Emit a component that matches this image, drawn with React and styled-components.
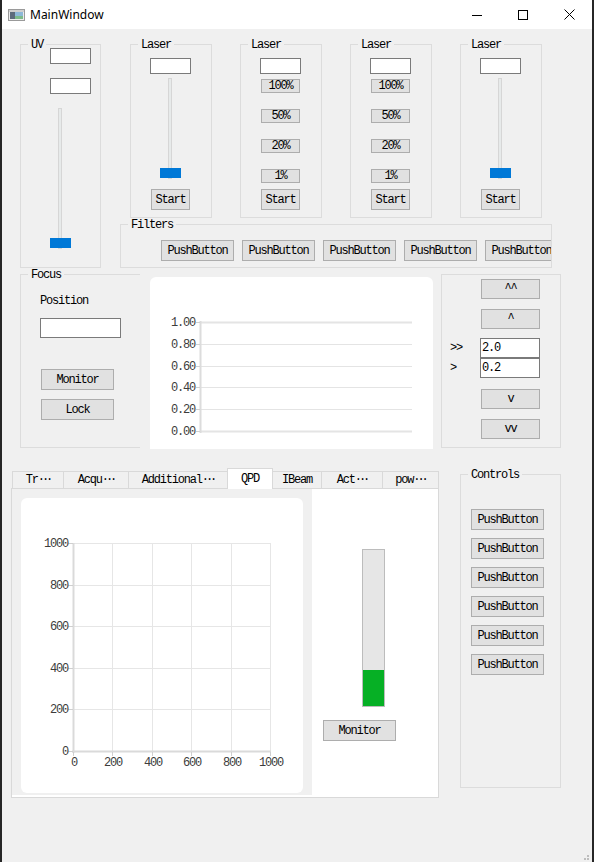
import React from "react";
import styled, { createGlobalStyle } from "styled-components";

const GlobalStyle = createGlobalStyle`
  html, body {
    margin: 0;
    padding: 0;
    background: #262626;
  }
  body {
    font-family: "Liberation Mono", "Courier New", monospace;
    font-size: 12px;
    letter-spacing: -1.2px;
    color: #000;
  }
  * {
    box-sizing: border-box;
  }
`;

const Window = styled.div`
  position: relative;
  margin-left: 2px;
  width: 590px;
  height: 862px;
  background: #f0f0f0;
  display: flex;
  flex-direction: column;
  overflow: hidden;
`;

const TitleBar = styled.div`
  height: 29px;
  flex-shrink: 0;
  display: flex;
  align-items: center;
  background: #fff;
  padding-left: 6px;
`;

const WindowTitle = styled.span`
  flex: 1;
  margin-left: 5px;
  font-family: "Noto Sans", "Liberation Sans", sans-serif;
  font-size: 12px;
  letter-spacing: 0;
`;

const CaptionButton = styled.div`
  width: 46px;
  height: 29px;
  display: flex;
  align-items: center;
  justify-content: center;
`;

const Body = styled.div`
  flex: 1;
  padding-top: 15px;
  display: flex;
  flex-direction: column;
`;

const TopRow = styled.div`
  display: flex;
  align-items: flex-start;
  padding-left: 18px;
`;

const MiddleRow = styled.div`
  display: flex;
  align-items: flex-start;
  padding-left: 18px;
`;

const BottomRow = styled.div`
  display: flex;
  align-items: flex-start;
  padding-left: 9px;
  margin-top: 19px;
`;

const GroupBox = styled.div`
  position: relative;
  flex-shrink: 0;
  display: flex;
  flex-direction: column;
  align-items: flex-start;
  gap: ${(p) => p.$gap || 0}px;
  width: ${(p) => p.$w}px;
  height: ${(p) => p.$h}px;
  margin-top: ${(p) => p.$mt || 0}px;
  margin-left: ${(p) => p.$ml || 0}px;
  padding: ${(p) => p.$pad || "0"};
  border: 1px solid #dcdcdc;
  border-right-width: ${(p) => (p.$openRight ? 0 : 1)}px;
`;

const GroupTitle = styled.span`
  position: absolute;
  top: -7px;
  left: 7px;
  padding: 0 3px;
  line-height: 14px;
  background: #f0f0f0;
  white-space: nowrap;
`;

const EditBox = styled.div`
  flex-shrink: 0;
  width: ${(p) => p.$w || 41}px;
  height: ${(p) => p.$h || 16}px;
  margin-top: ${(p) => p.$mt || 0}px;
  padding-left: 1px;
  line-height: ${(p) => (p.$h || 16) - 2}px;
  background: #fff;
  border: 1px solid #7a7a7a;
`;

const Button = styled.button`
  flex-shrink: 0;
  width: ${(p) => p.$w || 73}px;
  height: ${(p) => p.$h || 21}px;
  margin: ${(p) => p.$m || "0"};
  padding: 0;
  background: #e1e1e1;
  border: 1px solid #adadad;
  font: inherit;
  letter-spacing: inherit;
  line-height: 1;
  color: #000;
  white-space: nowrap;
`;

const Slider = styled.div`
  position: relative;
  flex-shrink: 0;
  width: 21px;
  height: ${(p) => p.$h}px;
  margin: ${(p) => p.$m || "0"};
`;

const SliderGroove = styled.div`
  position: absolute;
  left: 8px;
  top: 0;
  bottom: 0;
  width: 4px;
  background: #e7eaea;
  border: 1px solid #d6d6d6;
`;

const SliderHandle = styled.div`
  position: absolute;
  left: 0;
  bottom: 1px;
  width: 21px;
  height: 10px;
  background: #0078d7;
`;

const LaserColumn = styled.div`
  display: flex;
  flex-direction: column;
  width: 432px;
  margin-left: 19px;
`;

const LaserRow = styled.div`
  display: flex;
  gap: 28px;
  padding-left: 10px;
`;

const FilterStrip = styled.div`
  display: flex;
  gap: 8px;
  width: 100%;
  height: 100%;
  padding: 15px 0 0 40px;
  overflow: hidden;
`;

const FieldLabel = styled.span`
  line-height: 14px;
`;

const ChartView = styled.div`
  flex-shrink: 0;
  width: ${(p) => p.$w}px;
  height: ${(p) => p.$h}px;
  padding: ${(p) => p.$pad};
  background: #f0f0f0;
`;

const ChartCard = styled.div`
  width: 100%;
  height: 100%;
  background: #fff;
  border-radius: ${(p) => (p.$topOnly ? "6px 6px 0 0" : "6px")};
  overflow: hidden;
`;

const Plot = styled.svg`
  display: block;
  text {
    font-family: "Liberation Mono", "Courier New", monospace;
    font-size: 12px;
    letter-spacing: -1.2px;
    fill: #3c3c3c;
  }
`;

const StepRow = styled.div`
  display: flex;
  align-items: center;
  margin-top: ${(p) => p.$mt || 0}px;
`;

const StepLabel = styled.span`
  width: 30px;
  flex-shrink: 0;
`;

const TabWidget = styled.div`
  display: flex;
  flex-direction: column;
  width: 428px;
  flex-shrink: 0;
`;

const TabBar = styled.div`
  height: 20px;
  display: flex;
  align-items: flex-end;
  padding-left: 1px;
`;

const Tab = styled.div`
  position: relative;
  z-index: ${(p) => (p.$active ? 1 : 0)};
  flex-shrink: 0;
  width: ${(p) => p.$w}px;
  height: ${(p) => (p.$active ? 21 : 17)}px;
  margin-bottom: ${(p) => (p.$active ? -1 : 0)}px;
  margin-left: ${(p) => (p.$first ? 0 : -1)}px;
  display: flex;
  align-items: center;
  justify-content: center;
  background: ${(p) => (p.$active ? "#fff" : "#f0f0f0")};
  border: 1px solid #d9d9d9;
  border-bottom: none;
  white-space: nowrap;
`;

const Dots = styled.span`
  letter-spacing: -3px;
`;

const TabPane = styled.div`
  display: flex;
  height: 310px;
  background: #fff;
  border: 1px solid #d9d9d9;
`;

const MeterColumn = styled.div`
  display: flex;
  flex-direction: column;
  align-items: flex-start;
  padding-top: 60px;
`;

const VBar = styled.div`
  width: 23px;
  height: 158px;
  margin-left: 50px;
  display: flex;
  flex-direction: column;
  justify-content: flex-end;
  background: #e6e6e6;
  border: 1px solid #bcbcbc;
`;

const VBarFill = styled.div`
  height: ${(p) => p.$value}%;
  background: #06b025;
`;

const SizeGrip = styled.svg`
  position: absolute;
  right: 2px;
  bottom: 1px;
`;

const lineYs = [45, 67, 89, 110, 132, 154];
const lineLabels = ["1.00", "0.80", "0.60", "0.40", "0.20", "0.00"];

const LineChart = () => (
  <Plot width="283" height="172">
    {lineYs.map((y, i) => (
      <line
        key={"g" + i}
        x1="50"
        x2="262"
        y1={y + 0.5}
        y2={y + 0.5}
        stroke="#e4e4e4"
        strokeWidth={i === 0 || i === 5 ? 2 : 1}
      />
    ))}
    <line x1="50.5" x2="50.5" y1="44" y2="156" stroke="#dcdcdc" strokeWidth="2" />
    {lineYs.map((y, i) => (
      <line key={"t" + i} x1="46" x2="50" y1={y + 0.5} y2={y + 0.5} stroke="#d0d0d0" />
    ))}
    {lineYs.map((y, i) => (
      <text key={"l" + i} x="45" y={y + 1} textAnchor="end" dominantBaseline="central">
        {lineLabels[i]}
      </text>
    ))}
  </Plot>
);

const gridXs = [52, 91, 131, 170, 210, 249];
const gridYs = [45, 87, 128, 170, 211, 253];
const axisValues = ["0", "200", "400", "600", "800", "1000"];

const ScatterChart = () => (
  <Plot width="282" height="295">
    {gridXs.map((x, i) => (
      <line key={"vx" + i} x1={x + 0.5} x2={x + 0.5} y1="45" y2="253" stroke="#e6e6e6" />
    ))}
    {gridYs.map((y, i) => (
      <line key={"hy" + i} x1="52" x2="250" y1={y + 0.5} y2={y + 0.5} stroke="#e6e6e6" />
    ))}
    <line x1="52.5" x2="52.5" y1="45" y2="255" stroke="#dadada" strokeWidth="2" />
    <line x1="51" x2="250" y1="253.5" y2="253.5" stroke="#dadada" strokeWidth="2" />
    {gridYs.map((y, i) => (
      <line key={"ty" + i} x1="47" x2="52" y1={y + 0.5} y2={y + 0.5} stroke="#cfcfcf" />
    ))}
    {gridXs.map((x, i) => (
      <line key={"tx" + i} x1={x + 0.5} x2={x + 0.5} y1="254" y2="258" stroke="#cfcfcf" />
    ))}
    {gridYs.map((y, i) => (
      <text key={"ly" + i} x="47" y={y + 1} textAnchor="end" dominantBaseline="central">
        {axisValues[5 - i]}
      </text>
    ))}
    {gridXs.map((x, i) => (
      <text key={"lx" + i} x={x + 1} y="265" textAnchor="middle" dominantBaseline="central">
        {axisValues[i]}
      </text>
    ))}
  </Plot>
);

const LaserGroup = ({ steps }) => (
  <GroupBox $w={82} $h={174} $pad="13px 0 0 19px">
    <GroupTitle>Laser</GroupTitle>
    <EditBox />
    {steps ? (
      <>
        <Button $w={39} $h={14} $m="5px 0 0 1px">100%</Button>
        <Button $w={39} $h={14} $m="16px 0 0 1px">50%</Button>
        <Button $w={39} $h={14} $m="16px 0 0 1px">20%</Button>
        <Button $w={39} $h={14} $m="16px 0 0 1px">1%</Button>
        <Button $w={39} $h={21} $m="6px 0 0 1px">Start</Button>
      </>
    ) : (
      <>
        <Slider $h={101} $m="4px 0 0 10px">
          <SliderGroove />
          <SliderHandle />
        </Slider>
        <Button $w={39} $h={21} $m="10px 0 0 1px">Start</Button>
      </>
    )}
  </GroupBox>
);

const tabs = [
  { w: 52, label: "Tr", cut: true },
  { w: 66, label: "Acqu", cut: true },
  { w: 100, label: "Additional", cut: true },
  { w: 46, label: "QPD", active: true },
  { w: 50, label: "IBeam" },
  { w: 62, label: "Act", cut: true },
  { w: 57, label: "pow", cut: true },
];

const App = () => {
  return (
    <>
      <GlobalStyle />
      <Window>
        <TitleBar>
          <svg width="17" height="12" viewBox="0 0 17 12">
            <rect x="0.5" y="0.5" width="16" height="11" fill="#ececec" stroke="#9a9a9a" />
            <rect x="1" y="1" width="15" height="2" fill="#cfcfcf" />
            <rect x="2" y="3" width="5" height="7" fill="#5d6b7c" />
            <rect x="7" y="3" width="8" height="4" fill="#8db8d8" />
            <rect x="7" y="7" width="8" height="3" fill="#7dbb8a" />
          </svg>
          <WindowTitle>MainWindow</WindowTitle>
          <CaptionButton>
            <svg width="10" height="10" viewBox="0 0 10 10">
              <line x1="0" x2="10" y1="5.5" y2="5.5" stroke="#000" />
            </svg>
          </CaptionButton>
          <CaptionButton>
            <svg width="10" height="10" viewBox="0 0 10 10">
              <rect x="0.5" y="0.5" width="9" height="9" fill="none" stroke="#000" />
            </svg>
          </CaptionButton>
          <CaptionButton>
            <svg width="11" height="11" viewBox="0 0 11 11">
              <path d="M0.5 0.5 L10.5 10.5 M10.5 0.5 L0.5 10.5" stroke="#000" />
            </svg>
          </CaptionButton>
        </TitleBar>

        <Body>
          <TopRow>
            <GroupBox $w={81} $h={224} $pad="3px 0 0 29px" $gap={14}>
              <GroupTitle>UV</GroupTitle>
              <EditBox />
              <EditBox />
              <Slider $h={141}>
                <SliderGroove />
                <SliderHandle />
              </Slider>
            </GroupBox>

            <LaserColumn>
              <LaserRow>
                <LaserGroup />
                <LaserGroup steps />
                <LaserGroup steps />
                <LaserGroup />
              </LaserRow>
              <GroupBox $w={432} $h={44} $mt={6}>
                <GroupTitle>Filters</GroupTitle>
                <FilterStrip>
                  {[0, 1, 2, 3, 4].map((i) => (
                    <Button key={i}>PushButton</Button>
                  ))}
                </FilterStrip>
              </GroupBox>
            </LaserColumn>
          </TopRow>

          <MiddleRow>
            <GroupBox $w={120} $h={174} $mt={6} $openRight $pad="19px 0 0 19px">
              <GroupTitle>Focus</GroupTitle>
              <FieldLabel>Position</FieldLabel>
              <EditBox $w={81} $h={20} $mt={10} />
              <Button $m="31px 0 0 1px">Monitor</Button>
              <Button $m="9px 0 0 1px">Lock</Button>
            </GroupBox>

            <ChartView $w={301} $h={181} $pad="9px 8px 0 10px">
              <ChartCard $topOnly>
                <LineChart />
              </ChartCard>
            </ChartView>

            <GroupBox $w={120} $h={174} $mt={6} $pad="4px 0 0 8px">
              <StepRow>
                <StepLabel />
                <Button $w={59} $h={20} $m="0 0 0 1px">^^</Button>
              </StepRow>
              <StepRow $mt={10}>
                <StepLabel />
                <Button $w={59} $h={20} $m="0 0 0 1px">^</Button>
              </StepRow>
              <StepRow $mt={9}>
                <StepLabel>&gt;&gt;</StepLabel>
                <EditBox $w={60} $h={20}>2.0</EditBox>
              </StepRow>
              <StepRow>
                <StepLabel>&gt;</StepLabel>
                <EditBox $w={60} $h={20}>0.2</EditBox>
              </StepRow>
              <StepRow $mt={11}>
                <StepLabel />
                <Button $w={59} $h={20} $m="0 0 0 1px">v</Button>
              </StepRow>
              <StepRow $mt={10}>
                <StepLabel />
                <Button $w={59} $h={20} $m="0 0 0 1px">vv</Button>
              </StepRow>
            </GroupBox>
          </MiddleRow>

          <BottomRow>
            <TabWidget>
              <TabBar>
                {tabs.map((t, i) => (
                  <Tab key={t.label} $w={t.w} $active={t.active} $first={i === 0}>
                    {t.label}
                    {t.cut && <Dots>···</Dots>}
                  </Tab>
                ))}
              </TabBar>
              <TabPane>
                <ChartView $w={300} $h={306} $pad="9px 9px 2px 9px">
                  <ChartCard>
                    <ScatterChart />
                  </ChartCard>
                </ChartView>
                <MeterColumn>
                  <VBar>
                    <VBarFill $value={23} />
                  </VBar>
                  <Button $m="13px 0 0 11px">Monitor</Button>
                </MeterColumn>
              </TabPane>
            </TabWidget>

            <GroupBox $w={101} $h={314} $mt={6} $ml={21} $pad="34px 0 0 10px" $gap={8}>
              <GroupTitle>Controls</GroupTitle>
              {[0, 1, 2, 3, 4, 5].map((i) => (
                <Button key={i}>PushButton</Button>
              ))}
            </GroupBox>
          </BottomRow>
        </Body>

        <SizeGrip width="8" height="8" viewBox="0 0 8 8">
          <rect x="5" y="2" width="2" height="2" fill="#bdbdbd" />
          <rect x="2" y="5" width="2" height="2" fill="#bdbdbd" />
          <rect x="5" y="5" width="2" height="2" fill="#bdbdbd" />
        </SizeGrip>
      </Window>
    </>
  );
};

export default App;
